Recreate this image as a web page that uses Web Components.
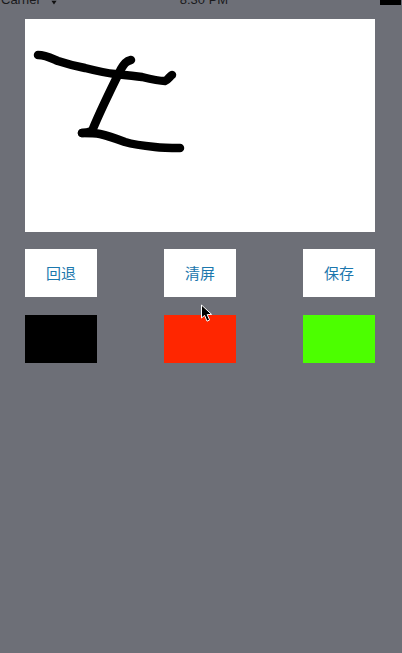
<!DOCTYPE html>
<html>
<head>
<meta charset="utf-8">
<title>画板</title>
<style>
  html, body { margin: 0; height: 100%; background: #6d6f77; overflow: hidden; }
</style>
</head>
<body>
<draw-app>
  <status-bar></status-bar>
  <sign-pad></sign-pad>
  <div slot="actions">
    <pad-button>回退</pad-button>
    <pad-button>清屏</pad-button>
    <pad-button>保存</pad-button>
  </div>
  <div slot="colors">
    <color-swatch color="#000000"></color-swatch>
    <color-swatch color="#ff2600"></color-swatch>
    <color-swatch color="#4cff00"></color-swatch>
  </div>
</draw-app>
<script>
class DrawApp extends HTMLElement {
  constructor() {
    super();
    const root = this.attachShadow({ mode: 'open' });
    root.innerHTML = `
      <style>
        :host { display: block; position: relative; height: 653px; background: #6d6f77; overflow: hidden; }
        .main { padding: 0 27px 0 25px; display: flex; flex-direction: column; }
        .row { margin-top: 18px; }
        ::slotted([slot]) { display: flex; justify-content: space-between; }
        .cursor { position: absolute; left: 200px; top: 304px; width: 14px; height: 20px; }
      </style>
      <slot></slot>
      <div class="main">
        <slot name="pad"></slot>
        <div class="row" style="margin-top:17px"><slot name="actions"></slot></div>
        <div class="row"><slot name="colors"></slot></div>
      </div>
      <svg class="cursor" viewBox="0 0 14 20">
        <path d="M1.5 1 L1.5 14 L4.6 11.4 L7 17.2 L9.6 16 L7.2 10.6 L11.6 10.4 Z" fill="#000" stroke="#fff" stroke-width="1" stroke-linejoin="round"/>
      </svg>
    `;
    // the pad sits in the padded column, move it from light DOM to its slot
    this.querySelector('sign-pad').slot = 'pad';
  }
}

class StatusBar extends HTMLElement {
  constructor() {
    super();
    const root = this.attachShadow({ mode: 'open' });
    root.innerHTML = `
      <style>
        :host { display: block; height: 19px; overflow: hidden; position: relative; }
        .bar {
          margin-top: -7px; display: grid; grid-template-columns: 1fr auto 1fr; align-items: end;
          font: 13px/14px "Liberation Sans", Arial, sans-serif; color: #1a1a1c;
        }
        .left { display: flex; align-items: end; gap: 8px; padding-left: 1px; }
        .left svg { margin-bottom: 2px; }
        .time { padding-left: 6px; }
        .right { display: flex; justify-content: flex-end; padding-right: 1px; }
        .battery { width: 21px; height: 5px; margin-bottom: 2px; background: #000; }
        span { display: block; }
      </style>
      <div class="bar">
        <div class="left"><span>Carrier</span>
          <svg width="10" height="7" viewBox="0 0 10 7">
            <path d="M0 0 H10 L8.6 1.6 H1.4 Z M2.4 2.8 H7.6 L5 6.4 Z" fill="#111"/>
          </svg>
        </div>
        <span class="time">8:30 PM</span>
        <div class="right"><div class="battery"></div></div>
      </div>
    `;
  }
}

class SignPad extends HTMLElement {
  constructor() {
    super();
    const root = this.attachShadow({ mode: 'open' });
    root.innerHTML = `
      <style>
        :host { display: block; height: 213px; background: #fff; }
        svg { display: block; width: 100%; height: 100%; }
        path { fill: none; stroke: #000; stroke-width: 8.5; stroke-linecap: round; stroke-linejoin: round; }
      </style>
      <svg viewBox="0 0 350 213">
        <path d="M13 36 C21 36 28 40 33 42 C45 46 50 47 60 49 C72 52 80 54 90 55 C100 56 110 57 117 58 C125 60 135 62 140 62 C143 61 145 57 147 56"/>
        <path d="M106 41 C101 42 99 45 96 50 C88 66 76 90 67 112 C62 114 60 114 57 114"/>
        <path d="M57 114 C64 114 70 114 75 115 C84 117 92 120 100 123 C110 126 120 127 130 128 C138 129 148 129 155 129"/>
      </svg>
    `;
  }
}

class PadButton extends HTMLElement {
  constructor() {
    super();
    const root = this.attachShadow({ mode: 'open' });
    root.innerHTML = `
      <style>
        :host {
          display: flex; align-items: center; justify-content: center;
          width: 72px; height: 46px; padding-bottom: 2px; background: #fff; color: #1b77ad;
          font: 15px "Liberation Sans", "Noto Sans CJK SC", sans-serif;
        }
      </style>
      <slot></slot>
    `;
  }
}

class ColorSwatch extends HTMLElement {
  constructor() {
    super();
    const root = this.attachShadow({ mode: 'open' });
    root.innerHTML = `
      <style>
        :host { display: block; width: 72px; height: 48px; background: var(--swatch); }
      </style>
    `;
    this.style.setProperty('--swatch', this.getAttribute('color'));
  }
}

customElements.define('draw-app', DrawApp);
customElements.define('status-bar', StatusBar);
customElements.define('sign-pad', SignPad);
customElements.define('pad-button', PadButton);
customElements.define('color-swatch', ColorSwatch);
</script>
</body>
</html>
